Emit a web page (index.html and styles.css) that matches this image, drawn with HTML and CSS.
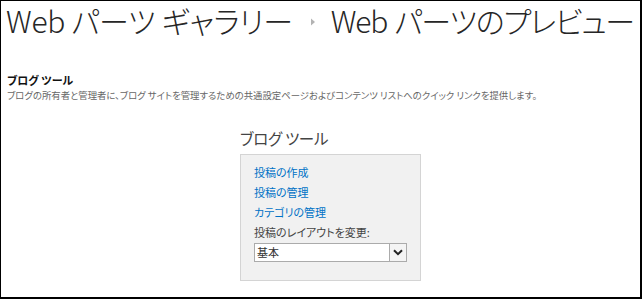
FILE: index.html
```html
<!DOCTYPE html>
<html lang="ja">
<head>
<meta charset="utf-8">
<link rel="stylesheet" href="styles.css">
</head>
<body>
<div class="frame">
  <h1 class="title">
    <span class="crumb">Web パーツ ギャラリー</span>
    <span class="sep"><svg width="6" height="8" viewBox="0 0 6 8"><path d="M1 0.5 L5 4 L1 7.5 Z" fill="#b3b3b3"/></svg></span>
    <span class="crumb crumb-current">Web パーツのプレビュー</span>
  </h1>
  <div class="info">
    <div class="info-name">ブログ ツール</div>
    <div class="info-desc">ブログの所有者と管理者に、ブログ サイトを管理するための共通設定ページおよびコンテンツ リストへのクイック リンクを提供します。</div>
  </div>
  <div class="preview">
    <div class="wp-title">ブログ ツール</div>
    <div class="wp-box">
      <a class="wp-link">投稿の作成</a>
      <a class="wp-link">投稿の管理</a>
      <a class="wp-link">カテゴリの管理</a>
      <div class="wp-label">投稿のレイアウトを変更:</div>
      <div class="select">
        <span class="select-value">基本</span>
        <span class="select-btn"><svg width="10" height="7" viewBox="0 0 10 7"><path d="M1 1.2 L5 5.2 L9 1.2" fill="none" stroke="#222" stroke-width="2"/></svg></span>
      </div>
    </div>
  </div>
</div>
</body>
</html>
```
FILE: styles.css
```css
* { box-sizing: border-box; }
html, body { margin: 0; padding: 0; background: #fff; }
body {
  font-family: "Noto Sans CJK JP", "Noto Sans", sans-serif;
  font-feature-settings: "palt";
}
.frame {
  width: 642px;
  height: 299px;
  border-top: 1px solid #000;
  border-left: 1px solid #000;
  border-right: 2px solid #000;
  border-bottom: 2px solid #000;
}
.title {
  margin: 0;
  padding: 0 0 0 5px;
  height: 38px;
  display: flex;
  align-items: center;
  font-size: 30px;
  font-weight: 300;
  color: #262626;
  line-height: 38px;
  white-space: nowrap;
}
.crumb { letter-spacing: -0.3px; }
.crumb-current { letter-spacing: -1.2px; word-spacing: 2px; }
.sep {
  display: flex;
  align-items: center;
  margin: 4px 15px 0 17px;
}
.info {
  padding: 33px 0 0 6px;
}
.info-name {
  font-size: 11px;
  font-weight: 700;
  color: #111;
  line-height: 16px;
}
.info-desc {
  font-size: 9.4px;
  color: #666;
  line-height: 14px;
  white-space: nowrap;
}
.preview {
  padding: 25px 0 0 239px;
}
.wp-title {
  font-size: 15.5px;
  color: #444;
  line-height: 22px;
  height: 27px;
  letter-spacing: -0.3px;
}
.wp-box {
  width: 181px;
  height: 127px;
  background: #f1f1f1;
  border: 1px solid #d4d4d4;
  padding: 7px 0 0 13px;
  display: flex;
  flex-direction: column;
}
.wp-link {
  font-size: 11px;
  color: #0072c6;
  line-height: 20px;
}
.wp-label {
  font-size: 11px;
  color: #444;
  line-height: 20px;
}
.select {
  margin-top: 1px;
  width: 153px;
  height: 19px;
  background: #fff;
  border: 1px solid #ababab;
  display: flex;
  align-items: center;
  justify-content: space-between;
}
.select-value {
  font-size: 11px;
  color: #333;
  padding-left: 2px;
  line-height: 17px;
}
.select-btn {
  width: 17px;
  height: 17px;
  border-left: 1px solid #ababab;
  background: #f4f4f4;
  display: flex;
  align-items: center;
  justify-content: center;
}
```
